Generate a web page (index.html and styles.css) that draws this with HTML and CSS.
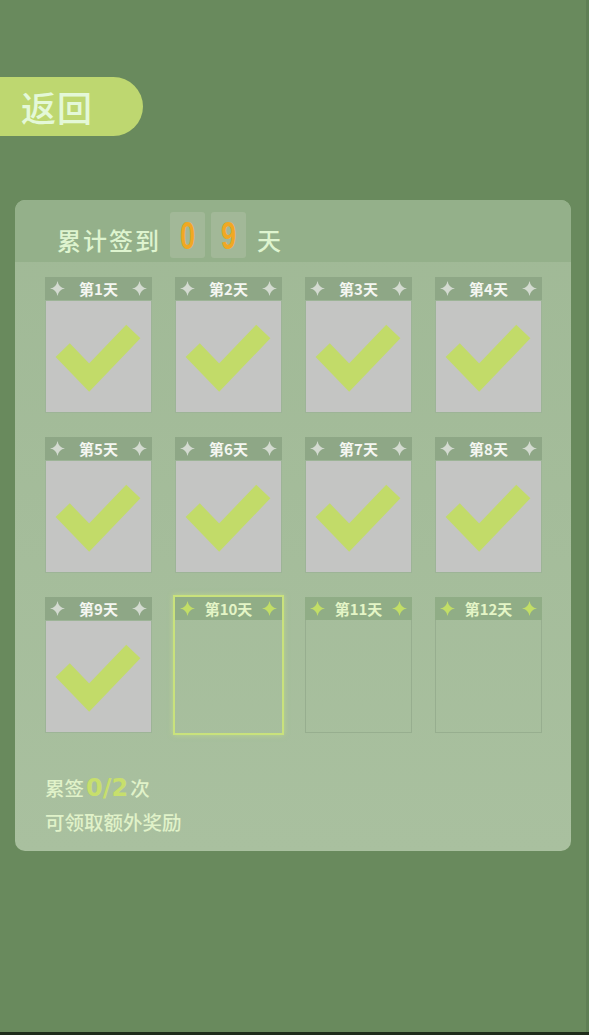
FILE: index.html
```html
<!DOCTYPE html>
<html lang="zh-CN">
<head>
<meta charset="utf-8">
<title>签到</title>
<link rel="stylesheet" href="styles.css">
</head>
<body>
<div class="screen">
  <div class="back">返回</div>
  <section class="panel">
    <header class="panel-head">
      <span class="title">累计签到</span>
      <span class="digit"><span class="num">0</span></span>
      <span class="digit"><span class="num">9</span></span>
      <span class="title day">天</span>
    </header>
    <div class="grid">
      <div class="cell done"><div class="label"><svg class="star" viewBox="0 0 14 14"><path d="M7 0Q8 6 14 7Q8 8 7 14Q6 8 0 7Q6 6 7 0Z"/></svg><span>第1天</span><svg class="star" viewBox="0 0 14 14"><path d="M7 0Q8 6 14 7Q8 8 7 14Q6 8 0 7Q6 6 7 0Z"/></svg></div><div class="box"><svg class="check" viewBox="0 0 107 113"><polyline points="17,50 44,78 89,31"/></svg></div></div>
      <div class="cell done"><div class="label"><svg class="star" viewBox="0 0 14 14"><path d="M7 0Q8 6 14 7Q8 8 7 14Q6 8 0 7Q6 6 7 0Z"/></svg><span>第2天</span><svg class="star" viewBox="0 0 14 14"><path d="M7 0Q8 6 14 7Q8 8 7 14Q6 8 0 7Q6 6 7 0Z"/></svg></div><div class="box"><svg class="check" viewBox="0 0 107 113"><polyline points="17,50 44,78 89,31"/></svg></div></div>
      <div class="cell done"><div class="label"><svg class="star" viewBox="0 0 14 14"><path d="M7 0Q8 6 14 7Q8 8 7 14Q6 8 0 7Q6 6 7 0Z"/></svg><span>第3天</span><svg class="star" viewBox="0 0 14 14"><path d="M7 0Q8 6 14 7Q8 8 7 14Q6 8 0 7Q6 6 7 0Z"/></svg></div><div class="box"><svg class="check" viewBox="0 0 107 113"><polyline points="17,50 44,78 89,31"/></svg></div></div>
      <div class="cell done"><div class="label"><svg class="star" viewBox="0 0 14 14"><path d="M7 0Q8 6 14 7Q8 8 7 14Q6 8 0 7Q6 6 7 0Z"/></svg><span>第4天</span><svg class="star" viewBox="0 0 14 14"><path d="M7 0Q8 6 14 7Q8 8 7 14Q6 8 0 7Q6 6 7 0Z"/></svg></div><div class="box"><svg class="check" viewBox="0 0 107 113"><polyline points="17,50 44,78 89,31"/></svg></div></div>
      <div class="cell done"><div class="label"><svg class="star" viewBox="0 0 14 14"><path d="M7 0Q8 6 14 7Q8 8 7 14Q6 8 0 7Q6 6 7 0Z"/></svg><span>第5天</span><svg class="star" viewBox="0 0 14 14"><path d="M7 0Q8 6 14 7Q8 8 7 14Q6 8 0 7Q6 6 7 0Z"/></svg></div><div class="box"><svg class="check" viewBox="0 0 107 113"><polyline points="17,50 44,78 89,31"/></svg></div></div>
      <div class="cell done"><div class="label"><svg class="star" viewBox="0 0 14 14"><path d="M7 0Q8 6 14 7Q8 8 7 14Q6 8 0 7Q6 6 7 0Z"/></svg><span>第6天</span><svg class="star" viewBox="0 0 14 14"><path d="M7 0Q8 6 14 7Q8 8 7 14Q6 8 0 7Q6 6 7 0Z"/></svg></div><div class="box"><svg class="check" viewBox="0 0 107 113"><polyline points="17,50 44,78 89,31"/></svg></div></div>
      <div class="cell done"><div class="label"><svg class="star" viewBox="0 0 14 14"><path d="M7 0Q8 6 14 7Q8 8 7 14Q6 8 0 7Q6 6 7 0Z"/></svg><span>第7天</span><svg class="star" viewBox="0 0 14 14"><path d="M7 0Q8 6 14 7Q8 8 7 14Q6 8 0 7Q6 6 7 0Z"/></svg></div><div class="box"><svg class="check" viewBox="0 0 107 113"><polyline points="17,50 44,78 89,31"/></svg></div></div>
      <div class="cell done"><div class="label"><svg class="star" viewBox="0 0 14 14"><path d="M7 0Q8 6 14 7Q8 8 7 14Q6 8 0 7Q6 6 7 0Z"/></svg><span>第8天</span><svg class="star" viewBox="0 0 14 14"><path d="M7 0Q8 6 14 7Q8 8 7 14Q6 8 0 7Q6 6 7 0Z"/></svg></div><div class="box"><svg class="check" viewBox="0 0 107 113"><polyline points="17,50 44,78 89,31"/></svg></div></div>
      <div class="cell done"><div class="label"><svg class="star" viewBox="0 0 14 14"><path d="M7 0Q8 6 14 7Q8 8 7 14Q6 8 0 7Q6 6 7 0Z"/></svg><span>第9天</span><svg class="star" viewBox="0 0 14 14"><path d="M7 0Q8 6 14 7Q8 8 7 14Q6 8 0 7Q6 6 7 0Z"/></svg></div><div class="box"><svg class="check" viewBox="0 0 107 113"><polyline points="17,50 44,78 89,31"/></svg></div></div>
      <div class="cell todo current"><div class="label"><svg class="star" viewBox="0 0 14 14"><path d="M7 0Q8 6 14 7Q8 8 7 14Q6 8 0 7Q6 6 7 0Z"/></svg><span>第10天</span><svg class="star" viewBox="0 0 14 14"><path d="M7 0Q8 6 14 7Q8 8 7 14Q6 8 0 7Q6 6 7 0Z"/></svg></div><div class="box"></div></div>
      <div class="cell todo"><div class="label"><svg class="star" viewBox="0 0 14 14"><path d="M7 0Q8 6 14 7Q8 8 7 14Q6 8 0 7Q6 6 7 0Z"/></svg><span>第11天</span><svg class="star" viewBox="0 0 14 14"><path d="M7 0Q8 6 14 7Q8 8 7 14Q6 8 0 7Q6 6 7 0Z"/></svg></div><div class="box"></div></div>
      <div class="cell todo"><div class="label"><svg class="star" viewBox="0 0 14 14"><path d="M7 0Q8 6 14 7Q8 8 7 14Q6 8 0 7Q6 6 7 0Z"/></svg><span>第12天</span><svg class="star" viewBox="0 0 14 14"><path d="M7 0Q8 6 14 7Q8 8 7 14Q6 8 0 7Q6 6 7 0Z"/></svg></div><div class="box"></div></div>
    </div>
    <div class="footer">
      <p class="line">累签<span class="count">0/2</span>次</p>
      <p class="line">可领取额外奖励</p>
    </div>
  </section>
</div>
<div class="bottom-edge"></div>
</body>
</html>
```

FILE: styles.css
```css
html, body {
  margin: 0;
  padding: 0;
}
body {
  background: #5f7f55;
  font-family: "Noto Sans CJK SC", "Noto Sans", sans-serif;
  width: 589px;
  height: 1035px;
  overflow: hidden;
}
.screen {
  width: 586px;
  height: 1032px;
  background: #698a5d;
  padding-top: 77px;
  box-sizing: border-box;
}
.back {
  width: 143px;
  height: 59px;
  box-sizing: border-box;
  padding-left: 21px;
  background: #bed770;
  border-radius: 0 30px 30px 0;
  color: #e4f8d8;
  font-size: 35px;
  font-weight: 500;
  line-height: 59px;
  letter-spacing: 1px;
}
.panel {
  margin: 64px 0 0 15px;
  width: 556px;
  height: 651px;
  border-radius: 10px;
  overflow: hidden;
  background: linear-gradient(#a0b996, #a9c09f);
}
.panel-head {
  height: 62px;
  box-sizing: border-box;
  background: #94b08a;
  display: flex;
  align-items: flex-end;
  padding: 12px 0 4px 42px;
}
.title {
  color: #def4cf;
  font-size: 24px;
  font-weight: 500;
  letter-spacing: 2px;
  line-height: 30px;
  margin-right: 9px;
  padding-bottom: 3px;
}
.title.day {
  margin-left: 5px;
}
.digit {
  width: 35px;
  height: 46px;
  margin-right: 6px;
  background: #a2b898;
  border-radius: 3px;
  display: flex;
  align-items: center;
  justify-content: center;
}
.num {
  display: inline-block;
  color: #f0a823;
  font-family: "Liberation Sans", sans-serif;
  font-size: 38px;
  font-weight: bold;
  line-height: 46px;
  transform: scaleX(0.72) translateY(1px);
}
.grid {
  margin: 15px 0 0 30px;
  display: grid;
  grid-template-columns: repeat(4, 107px);
  column-gap: 23px;
  row-gap: 24px;
}
.cell {
  width: 107px;
  height: 136px;
  display: flex;
  flex-direction: column;
  box-sizing: border-box;
}
.label {
  height: 23px;
  display: flex;
  align-items: center;
  justify-content: space-between;
  padding: 0 5px;
  background: #8ea786;
  color: #f4f6f1;
  font-size: 15px;
  font-weight: bold;
  flex-shrink: 0;
}
.star {
  width: 15px;
  height: 15px;
  fill: #d3dad0;
}
.box {
  flex: 1;
  box-sizing: border-box;
}
.done .box {
  background: #c4c5c3;
  border: 1px solid #9db497;
}
.check {
  display: block;
  width: 100%;
  height: 100%;
}
.check polyline {
  fill: none;
  stroke: #c2db69;
  stroke-width: 20;
  stroke-linejoin: miter;
  stroke-linecap: butt;
}
.todo .label {
  background: #90ad86;
  color: #e4f5c6;
  font-weight: bold;
  margin: 0 -1px;
}
.todo .star {
  fill: #c2de66;
}
.todo {
  border: 1px solid #97ae8f;
  border-top: none;
}
.current {
  border: none;
  outline: 2px solid #c9e27c;
  box-shadow: 0 0 5px 2px rgba(206, 234, 130, 0.55);
}
.current .label {
  margin: 0;
}
.footer {
  margin: 38px 0 0 30px;
}
.line {
  margin: 0;
  color: #e0f2c9;
  font-size: 19.5px;
  font-weight: 500;
  line-height: 34px;
  height: 34px;
  display: flex;
  align-items: center;
}
.count {
  color: #c7df6c;
  font-family: "DejaVu Sans", sans-serif;
  font-size: 24px;
  font-weight: bold;
  margin: 0 2px;
}
.bottom-edge {
  height: 3px;
  width: 589px;
  background: #1e2c1b;
}
```
